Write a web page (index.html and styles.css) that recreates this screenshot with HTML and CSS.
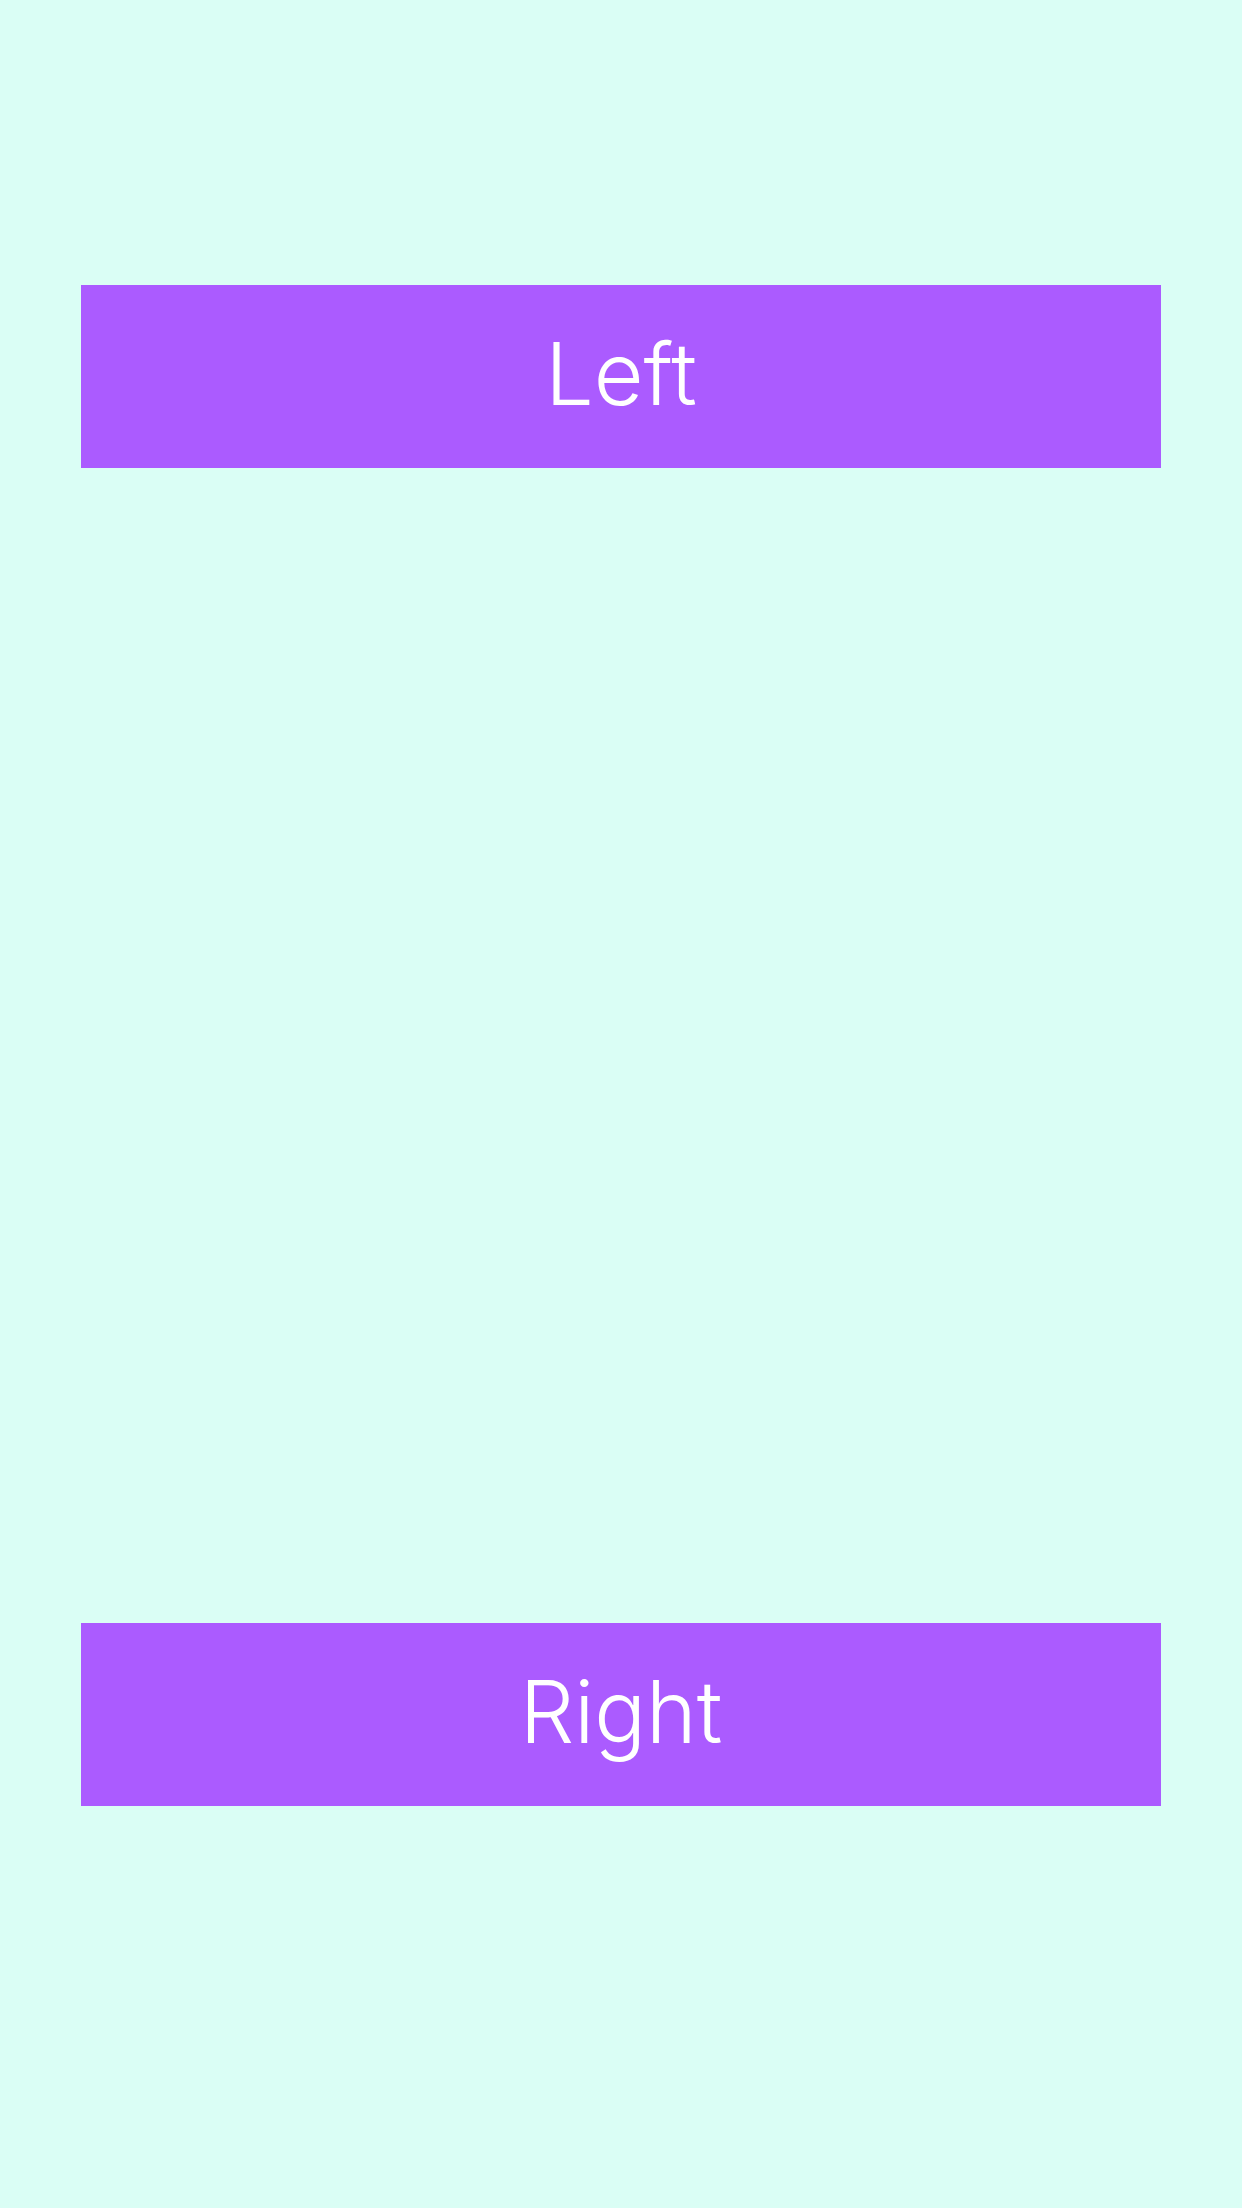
FILE: index.html
```html
<!DOCTYPE html>
<html>
<head>
<meta charset="utf-8">
<link rel="stylesheet" href="styles.css">
</head>
<body>
<main class="page">
  <div class="bar">Left</div>
  <div class="bar">Right</div>
</main>
</body>
</html>
```
FILE: styles.css
```css
html, body {
  margin: 0;
  padding: 0;
  background: #dafef5;
}
.page {
  width: 1242px;
  height: 2208px;
  box-sizing: border-box;
  padding: 285px 81px 0 81px;
  display: flex;
  flex-direction: column;
  gap: 1155px;
}
.bar {
  height: 183px;
  background: #ab5bff;
  color: #ffffff;
  display: flex;
  align-items: center;
  justify-content: center;
  font-family: "Inter", "Roboto", "Liberation Sans", sans-serif;
  font-weight: 300;
  font-size: 86px;
  padding-bottom: 5px;
  box-sizing: border-box;
}
```
